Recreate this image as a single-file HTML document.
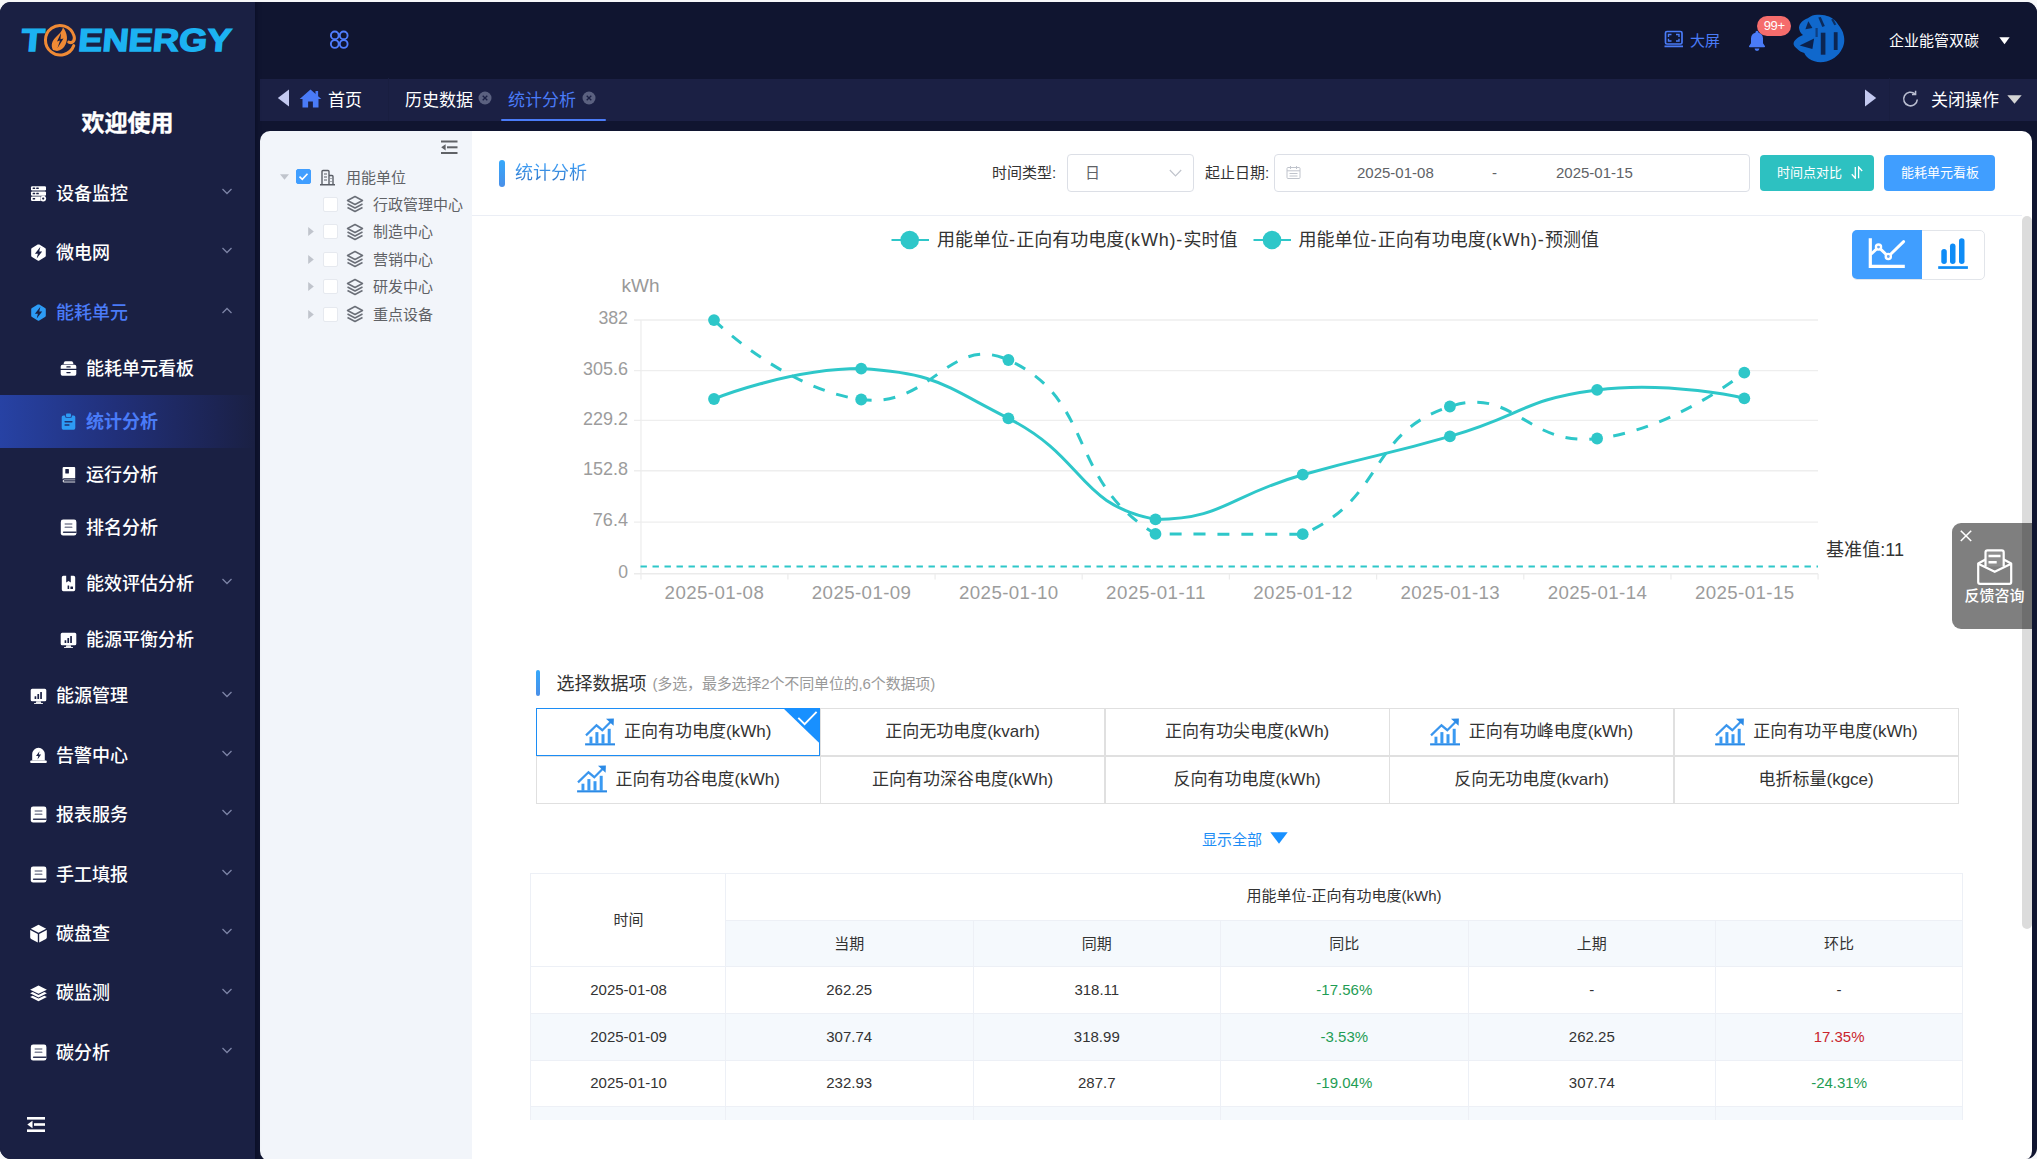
<!DOCTYPE html>
<html lang="zh-CN">
<head>
<meta charset="utf-8">
<title>统计分析</title>
<style>
*{box-sizing:border-box;margin:0;padding:0}
html,body{width:2037px;height:1159px;overflow:hidden;background:#f6f7f9}
body{font-family:"Liberation Sans","Noto Sans CJK SC",sans-serif;color:#333;position:relative}
.abs{position:absolute}
#app{position:absolute;left:0;top:2px;width:2037px;height:1157px;background:#101530;border-radius:11px;overflow:hidden}
#w{position:absolute;left:0;top:-2px;width:2037px;height:1159px}
#side{position:absolute;left:0;top:0;width:255px;height:1159px;background:#1a2043;box-shadow:1px 0 4px rgba(5,8,30,.550);z-index:2}
#welcome{position:absolute;left:0;top:106.300px;-webkit-text-stroke:.400px #fff;width:255px;text-align:center;font-size:23px;font-weight:700;color:#fff;line-height:34px;letter-spacing:0}
.mi{position:absolute;left:0;width:255px;height:59.4px;color:#fff;font-size:18px;font-weight:500}
.mi .ic{position:absolute;left:30px;top:22px;width:17px;height:17px;overflow:visible}
.mi .tx{position:absolute;left:56px;top:2.800px;line-height:57px;white-space:nowrap}
.mi .ar{position:absolute;left:221px;top:23px;width:12px;height:8px}
.sm{position:absolute;left:0;width:255px;height:53px;color:#fff;font-size:18px;font-weight:500}
.sm .ic{position:absolute;left:60px;top:19px;width:17px;height:17px;overflow:visible}
.sm .tx{position:absolute;left:86px;top:2.800px;line-height:51px;white-space:nowrap}
.sm .ar{position:absolute;left:221px;top:20px;width:12px;height:8px}
.blue{color:#4a7bf7}
#topbar{position:absolute;left:255px;top:0;width:1782px;height:78px;background:#101530}
#tabs{position:absolute;left:260px;top:79px;width:1777px;height:42px;background:#1b2044;color:#fff;font-size:17px}
#tabs .t{position:absolute;top:0;line-height:42px;white-space:nowrap}
#tree{position:absolute;left:260px;top:131px;width:212px;height:1030px;background:#f2f5fa;border-radius:10px 0 0 10px}
.tn{position:absolute;font-size:15px;color:#606266;line-height:20px;white-space:nowrap;margin-top:.500px}
.cb{position:absolute;width:15px;height:15px;border:1px solid #e6e9ef;border-radius:2px;background:#fff}
#main{position:absolute;left:472px;top:131px;width:1560px;height:1030px;background:#fff;border-radius:0 10px 10px 0;overflow:hidden}
</style>
</head>
<body>
<div id="app"><div id="w">

<div id="side">
<svg class="abs" style="left:14px;top:18px" width="230" height="44" viewBox="14 18 230 44">
  <g fill="#1cb2f2" stroke="#1cb2f2" stroke-width="1.400" stroke-linejoin="miter" font-family="Liberation Sans, sans-serif" font-weight="700" font-size="31.800" transform="translate(0 51.300) skewX(-5) translate(0 -51.300)">
    <text x="20.500" y="51.300" textLength="23" lengthAdjust="spacingAndGlyphs">T</text>
    <text x="77.500" y="51.300" textLength="153" lengthAdjust="spacingAndGlyphs">ENERGY</text>
  </g>
  <g transform="rotate(-20 60 40)"><path d="M71 50A14.600 14.800 0 1 1 74.600 40.500C74.600 45.500 70.500 48 67.500 45" fill="none" stroke="#f08a35" stroke-width="3" stroke-linecap="round"/></g>
  <path d="M53 50C50.500 45 52 41 56 37C59 34 62 31.500 63 27.500C67.500 33 68 39.500 65.500 44.500C64 48 60.500 50.500 57 51z" fill="#f08a35"/>
  <path d="M61 33 57 41.500l3-1L57.500 48l6-9.500-3 .800z" fill="#1a2043"/>
</svg>
<div id="welcome">欢迎使用</div>

<div class="mi" style="top:163.0px"><svg class="ic" viewBox="0 0 17 17" fill="currentColor"><rect x="1" y="1.2" width="15" height="4.3" rx="1.2"/><rect x="1" y="6.4" width="15" height="4.3" rx="1.2"/><path d="M2.2 11.6h8.6a4.3 4.3 0 0 0 0 4.3H2.2a1.2 1.2 0 0 1-1.2-1.2v-1.9a1.2 1.2 0 0 1 1.2-1.2z"/><circle cx="13.2" cy="13.6" r="2.9"/><g fill="#1a2043"><rect x="2.6" y="2.6" width="2.6" height="1.5" rx=".5"/><rect x="6.2" y="2.6" width="2.6" height="1.5" rx=".5"/><rect x="2.6" y="7.8" width="2.6" height="1.5" rx=".5"/><rect x="6.2" y="7.8" width="2.6" height="1.5" rx=".5"/><rect x="2.6" y="13" width="2.6" height="1.5" rx=".5"/><circle cx="13.2" cy="13.6" r="1.1"/></g></svg><span class="tx">设备监控</span><svg class="ar" viewBox="0 0 12 8" fill="none" stroke="#7c83a6" stroke-width="1.3" transform="translate(0 1.500)"><path d="M1.500 1.500 6 6l4.500-4.500"/></svg></div>
<div class="mi" style="top:222.4px"><svg class="ic" viewBox="0 0 17 17" fill="currentColor"><path d="M8.5 .4a1.6 1.6 0 0 1 .8.2l5.7 3.3a1.6 1.6 0 0 1 .8 1.4v6.4a1.6 1.6 0 0 1-.8 1.4l-5.7 3.3a1.6 1.6 0 0 1-1.6 0l-5.7-3.3a1.6 1.6 0 0 1-.8-1.4V5.300a1.6 1.6 0 0 1 .8-1.400l5.700-3.300a1.600 1.600 0 0 1 .800-.200z"/><path d="M10.400 2.800 4.900 9.700h3l-1.200 4.700 5.500-7h-3z" fill="#1a2043"/></svg><span class="tx">微电网</span><svg class="ar" viewBox="0 0 12 8" fill="none" stroke="#7c83a6" stroke-width="1.3" transform="translate(0 1.500)"><path d="M1.500 1.500 6 6l4.500-4.500"/></svg></div>
<div class="mi blue" style="top:281.8px"><svg class="ic" viewBox="0 0 17 17" fill="currentColor" style="color:#2d9bf5"><path d="M8.5 .4a1.6 1.6 0 0 1 .8.2l5.7 3.3a1.6 1.6 0 0 1 .8 1.4v6.4a1.6 1.6 0 0 1-.8 1.4l-5.7 3.3a1.6 1.6 0 0 1-1.6 0l-5.7-3.3a1.6 1.6 0 0 1-.8-1.4V5.300a1.6 1.6 0 0 1 .8-1.400l5.700-3.300a1.600 1.600 0 0 1 .800-.200z"/><path d="M10.400 2.800 4.900 9.700h3l-1.200 4.700 5.500-7h-3z" fill="#1a2043"/></svg><span class="tx">能耗单元</span><svg class="ar" viewBox="0 0 12 8" fill="none" stroke="#7c83a6" stroke-width="1.3" transform="translate(0 1.500)"><path d="M1.500 6.500 6 2l4.500 4.500"/></svg></div>
<div class="sm" style="top:341.2px;height:53.0px"><svg class="ic" style="top:19.0px" viewBox="0 0 17 17" fill="currentColor"><path d="M5.6 1.300h5.800a1.700 1.700 0 0 1 1.600 1.200l.5 1.700H3.500l.5-1.700A1.700 1.700 0 0 1 5.600 1.300z"/><path d="M2.400 4.800h12.200a1.700 1.700 0 0 1 1.700 1.700v2.300H.700V6.500a1.700 1.700 0 0 1 1.700-1.700z"/><path d="M.700 10h15.600v4a1.700 1.700 0 0 1-1.700 1.700H2.400A1.700 1.700 0 0 1 .700 14z"/><g fill="#1a2043"><rect x="6.300" y="6.300" width="4.400" height="1.300" rx=".6"/><rect x="6.300" y="11.900" width="4.400" height="1.300" rx=".6"/></g></svg><span class="tx" style="line-height:51.0px">能耗单元看板</span></div>
<div class="abs" style="left:0;top:395.200px;width:255px;height:52.600px;background:linear-gradient(90deg,#2742a4 0%,#21307a 45%,#1c2453 85%,#1a2043 100%)"></div>
<div class="sm" style="top:394.2px;height:53.0px;font-weight:700"><svg class="ic" viewBox="0 0 17 17" fill="currentColor" style="top:19.0px;color:#2d9bf5"><path d="M3.300 2.500h1.900v1.300a1 1 0 0 0 1 1h4.600a1 1 0 0 0 1-1V2.500h1.900a1.600 1.600 0 0 1 1.600 1.600v11a1.600 1.600 0 0 1-1.600 1.600H3.300a1.600 1.600 0 0 1-1.600-1.600v-11a1.600 1.600 0 0 1 1.600-1.600z"/><rect x="6" y=".5" width="5" height="3.400" rx=".9"/><g fill="#20306f"><rect x="4.400" y="8" width="8.200" height="1.500" rx=".7"/><rect x="4.400" y="11.300" width="5.200" height="1.500" rx=".7"/></g></svg><span class="tx blue" style="line-height:51.0px">统计分析</span></div>
<div class="sm" style="top:447.2px;height:53.0px"><svg class="ic" style="top:19.0px" viewBox="0 0 17 17" fill="currentColor"><path d="M3.800 1h10.400a1 1 0 0 1 1 1v10.300H4.200a1.600 1.600 0 0 0-1.600 1.300V2.200A1.200 1.200 0 0 1 3.800 1z"/><path d="M4.300 13.400h10.900v.9H4.400a.6.600 0 0 0 0 1.200h10.800v.9H4.300a1.600 1.600 0 0 1-1.700-1.500 1.600 1.600 0 0 1 1.700-1.500z" opacity=".85"/><rect x="5.300" y="3" width="3.600" height="4.400" rx=".5" fill="#1a2043"/></svg><span class="tx" style="line-height:51.0px">运行分析</span></div>
<div class="sm" style="top:500.2px;height:53.0px"><svg class="ic" style="top:19.0px" viewBox="0 0 17 17" fill="currentColor"><rect x=".800" y=".600" width="15.600" height="16" rx="2.300"/><g fill="#1a2043"><rect x="4.600" y="4.200" width="7.800" height="1.500" rx=".400" opacity=".550"/><rect x="4.600" y="7.600" width="7.800" height="1.500" rx=".400" opacity=".550"/><path d="M3.600 12.600h12.800v1.500H3.600a.750.750 0 0 1 0-1.500z" opacity=".900"/></g></svg><span class="tx" style="line-height:51.0px">排名分析</span></div>
<div class="sm" style="top:553.2px;height:59.4px"><svg class="ic" style="top:22.2px" viewBox="0 0 17 17" fill="currentColor"><path d="M3.400.800h2.800v6.800l2.300-1.600 2.300 1.600V.800h2.800a1.600 1.600 0 0 1 1.600 1.600v12.200a1.600 1.600 0 0 1-1.600 1.600H3.400a1.600 1.600 0 0 1-1.600-1.600V2.400A1.600 1.600 0 0 1 3.400.800z"/><g fill="#1a2043"><rect x="7.600" y="10.400" width="1.600" height="3.600" rx=".3"/><rect x="10.400" y="11.600" width="2.600" height="2.400" rx=".3"/></g></svg><span class="tx" style="line-height:57.4px">能效评估分析</span><svg class="ar" style="top:23.2px" viewBox="0 0 12 8" fill="none" stroke="#7c83a6" stroke-width="1.3" transform="translate(0 1.500)"><path d="M1.500 1.500 6 6l4.500-4.500"/></svg></div>
<div class="sm" style="top:612.6px;height:53.0px"><svg class="ic" style="top:19.0px" viewBox="0 0 17 17" fill="currentColor"><path d="M2.200 .700h12.600a1.500 1.500 0 0 1 1.500 1.500v9.500a1.500 1.500 0 0 1-1.500 1.500H2.200a1.500 1.500 0 0 1-1.500-1.500V2.200a1.500 1.500 0 0 1 1.500-1.500z"/><path d="M6.300 13.200h4.400l.5 1.700h1.300a.5.500 0 0 1 0 1.100H4.500a.5.500 0 0 1 0-1.100h1.300z" opacity=".9"/><g fill="#1a2043"><rect x="4.600" y="8.300" width="1.700" height="2.700" rx=".3"/><rect x="7.400" y="6" width="1.700" height="5" rx=".3"/><rect x="10.200" y="4" width="1.700" height="7" rx=".3"/></g></svg><span class="tx" style="line-height:51.0px">能源平衡分析</span></div>
<div class="mi" style="top:665.6px"><svg class="ic" viewBox="0 0 17 17" fill="currentColor"><path d="M2.200 .700h12.600a1.500 1.500 0 0 1 1.500 1.500v9.500a1.500 1.500 0 0 1-1.500 1.500H2.200a1.500 1.500 0 0 1-1.500-1.500V2.200a1.500 1.500 0 0 1 1.500-1.500z"/><path d="M6.300 13.200h4.400l.5 1.700h1.300a.5.500 0 0 1 0 1.100H4.500a.5.500 0 0 1 0-1.100h1.300z" opacity=".9"/><g fill="#1a2043"><rect x="4.600" y="8.300" width="1.700" height="2.700" rx=".3"/><rect x="7.400" y="6" width="1.700" height="5" rx=".3"/><rect x="10.200" y="4" width="1.700" height="7" rx=".3"/></g></svg><span class="tx">能源管理</span><svg class="ar" viewBox="0 0 12 8" fill="none" stroke="#7c83a6" stroke-width="1.3" transform="translate(0 1.500)"><path d="M1.500 1.500 6 6l4.500-4.500"/></svg></div>
<div class="mi" style="top:725.0px"><svg class="ic" viewBox="0 0 17 17" fill="currentColor"><path d="M8.500 .800a6.300 6.300 0 0 1 6.300 6.300v6.400H2.200V7.100A6.300 6.300 0 0 1 8.500 .800z"/><rect x=".200" y="13.600" width="16.600" height="2.400" rx=".900"/><path d="M9.500 4.300 6 9.100h2.300l-.800 3.500 3.600-5H8.800z" fill="#1a2043"/></svg><span class="tx">告警中心</span><svg class="ar" viewBox="0 0 12 8" fill="none" stroke="#7c83a6" stroke-width="1.3" transform="translate(0 1.500)"><path d="M1.500 1.500 6 6l4.500-4.500"/></svg></div>
<div class="mi" style="top:784.4px"><svg class="ic" viewBox="0 0 17 17" fill="currentColor"><rect x=".800" y=".600" width="15.600" height="16" rx="2.300"/><g fill="#1a2043"><rect x="4.600" y="4.200" width="7.800" height="1.500" rx=".400" opacity=".550"/><rect x="4.600" y="7.600" width="7.800" height="1.500" rx=".400" opacity=".550"/><path d="M3.600 12.600h12.800v1.500H3.600a.750.750 0 0 1 0-1.500z" opacity=".900"/></g></svg><span class="tx">报表服务</span><svg class="ar" viewBox="0 0 12 8" fill="none" stroke="#7c83a6" stroke-width="1.3" transform="translate(0 1.500)"><path d="M1.500 1.500 6 6l4.500-4.500"/></svg></div>
<div class="mi" style="top:843.8px"><svg class="ic" viewBox="0 0 17 17" fill="currentColor"><rect x=".800" y=".600" width="15.600" height="16" rx="2.300"/><g fill="#1a2043"><rect x="4.600" y="4.200" width="7.800" height="1.500" rx=".400" opacity=".550"/><rect x="4.600" y="7.600" width="7.800" height="1.500" rx=".400" opacity=".550"/><path d="M3.600 12.600h12.800v1.500H3.600a.750.750 0 0 1 0-1.500z" opacity=".900"/></g></svg><span class="tx">手工填报</span><svg class="ar" viewBox="0 0 12 8" fill="none" stroke="#7c83a6" stroke-width="1.3" transform="translate(0 1.500)"><path d="M1.500 1.500 6 6l4.500-4.500"/></svg></div>
<div class="mi" style="top:903.2px"><svg class="ic" viewBox="0 0 17 17" fill="currentColor"><path d="M8.500 -.300 16.200 3.700 8.500 7.800 .800 3.700z"/><path d="M.200 5 7.800 9v8.400L1.100 13.900a1.600 1.600 0 0 1-.900-1.400z"/><path d="M16.800 5v7.500a1.600 1.600 0 0 1-.900 1.400L9.200 17.400V9z"/></svg><span class="tx">碳盘查</span><svg class="ar" viewBox="0 0 12 8" fill="none" stroke="#7c83a6" stroke-width="1.3" transform="translate(0 1.500)"><path d="M1.500 1.500 6 6l4.500-4.500"/></svg></div>
<div class="mi" style="top:962.6px"><svg class="ic" viewBox="0 0 17 17" fill="currentColor"><path d="M8.500 .600 16.900 4.700 8.500 8.800 .100 4.700z"/><path d="M2.700 7 8.500 9.900 14.300 7 16.900 8.300 8.500 12.500 .100 8.300z"/><path d="M2.700 10.700 8.500 13.600 14.300 10.700 16.900 12 8.500 16.200 .100 12z"/></svg><span class="tx">碳监测</span><svg class="ar" viewBox="0 0 12 8" fill="none" stroke="#7c83a6" stroke-width="1.3" transform="translate(0 1.500)"><path d="M1.500 1.500 6 6l4.500-4.500"/></svg></div>
<div class="mi" style="top:1022.0px"><svg class="ic" viewBox="0 0 17 17" fill="currentColor"><rect x=".800" y=".600" width="15.600" height="16" rx="2.300"/><g fill="#1a2043"><rect x="4.600" y="4.200" width="7.800" height="1.500" rx=".400" opacity=".550"/><rect x="4.600" y="7.600" width="7.800" height="1.500" rx=".400" opacity=".550"/><path d="M3.600 12.600h12.800v1.500H3.600a.750.750 0 0 1 0-1.500z" opacity=".900"/></g></svg><span class="tx">碳分析</span><svg class="ar" viewBox="0 0 12 8" fill="none" stroke="#7c83a6" stroke-width="1.3" transform="translate(0 1.500)"><path d="M1.500 1.500 6 6l4.500-4.500"/></svg></div>
<svg class="abs" style="left:27px;top:1116px" width="18" height="17" viewBox="0 0 18 17" fill="#fff"><rect x="0" y="1" width="18" height="2.600"/><rect x="7" y="7.200" width="11" height="2.600"/><rect x="0" y="13.400" width="18" height="2.600"/><path d="M5.500 4.800v7.400L.300 8.500z"/></svg>
</div><!--side-->
<div id="topbar"></div>
<svg class="abs" style="left:328px;top:29px" width="22" height="22" viewBox="328 29 22 22" fill="none" stroke="#4f7dfc" stroke-width="1.900"><circle cx="334.800" cy="35.400" r="3.900"/><circle cx="343.700" cy="35.400" r="3.900"/><circle cx="334.800" cy="44" r="3.900"/><circle cx="343.700" cy="44" r="3.900"/></svg>
<svg class="abs" style="left:1664px;top:30px" width="20" height="18" viewBox="0 0 20 18" fill="none" stroke="#4a7bf7" stroke-width="1.700"><rect x="1.500" y="1.500" width="16.500" height="12.500" rx="1.500"/><path d="M.500 16.300h18.500"/><path d="M4.500 7V4.500h3M15 7V4.500h-3M4.500 8.800V11h3M15 8.800V11h-3" stroke-width="1.400"/></svg>
<div class="abs" style="left:1690px;top:29.500px;font-size:15px;line-height:22px;color:#4a7bf7;white-space:nowrap">大屏</div>
<svg class="abs" style="left:1747px;top:30px" width="20" height="22" viewBox="0 0 20 22" fill="#4a7bf7"><path d="M10 .800a1.500 1.500 0 0 1 1.500 1.500v.400a6 6 0 0 1 4.500 5.800v4.800l1.900 2.600a.800.800 0 0 1-.600 1.300H2.700a.800.800 0 0 1-.600-1.300L4 13.300V8.500a6 6 0 0 1 4.500-5.800v-.400A1.500 1.500 0 0 1 10 .800z"/><path d="M7.600 18.500h4.800a2.400 2.400 0 0 1-4.800 0z"/></svg>
<div class="abs" style="left:1757px;top:16px;width:34.300px;height:19.600px;border-radius:10px;background:#f56c6c;color:#fff;font-size:13px;letter-spacing:-.400px;line-height:19.500px;text-align:center">99+</div>
<svg class="abs" style="left:1790px;top:12px" width="58" height="54" viewBox="1790 12 58 54"><path d="M1807.700 18.300C1811 15.800 1814 14.800 1817 14.800C1822 14.300 1826 15.300 1829 16.600C1833 18.500 1836 21 1837.800 24C1841 28 1843 31.500 1843.600 35C1844.300 37.500 1844.400 40 1844.200 42C1843.800 45.500 1842.500 48.500 1840.700 51.200C1838.500 54.500 1835.500 57.500 1832 59.300C1828.500 61.200 1824.500 62.200 1820.500 62.200C1816.500 62.200 1812.500 61 1809 58.800C1807 57.300 1805.300 55.300 1804.300 53C1801.500 52.300 1799 51 1797.300 49C1795.500 47.500 1793.900 46 1793.600 44.300C1793.400 42.500 1794.200 41 1795.600 39.700C1797.500 37.800 1800 36.300 1803 35C1800.500 33 1799.200 30.500 1799 28C1799 25.800 1800 23.800 1801.400 22.300C1803 20.500 1805.200 19.200 1807.700 18.300z" fill="#1068cc"/><g fill="#0b1535"><path d="M1808.300 21.200 1812.400 28.100 1805.400 29.300z" opacity=".8"/><path d="M1818.300 17.500 1820.800 17 1824.800 26 1822.300 27z" opacity=".75"/><path d="M1831.200 19.500 1833.200 18.800 1836.300 24.400 1834.300 25.200z" opacity=".7"/><path d="M1799.700 45.500 1814.100 38.500 1812.400 49z" opacity=".85"/><rect x="1820.800" y="32.700" width="4.600" height="22" opacity=".8"/><rect x="1833.800" y="32.200" width="3.800" height="17.800" opacity=".8"/><rect x="1815.500" y="28" width="2.200" height="9" opacity=".5"/></g></svg>
<div class="abs" style="left:1889px;top:29.500px;font-size:15px;line-height:22px;color:#fff;white-space:nowrap">企业能管双碳</div>
<svg class="abs" style="left:1999px;top:37px" width="11" height="8" viewBox="0 0 11 8" fill="#fff"><path d="M.300.300h10.400L5.500 7.300z"/></svg>
<div id="tabs"></div>
<svg class="abs" style="left:277px;top:89px" width="13" height="18" viewBox="0 0 13 18" fill="#c3c9f0"><path d="M12 .500v17L.800 9z"/></svg>
<svg class="abs" style="left:299px;top:89px" width="23" height="19" viewBox="0 0 23 19" fill="#4a7bf7"><path d="M11.500.600 22.300 10h-2.800v8.400h-5.600v-6h-4.800v6H3.500V10H.700z"/><rect x="16.500" y="2" width="2.600" height="5"/></svg>
<div class="abs" style="left:328px;top:89px;font-size:17px;line-height:24px;color:#fff;white-space:nowrap">首页</div>
<div class="abs" style="left:388px;top:78px;width:1px;height:43px;background:#191e40"></div>
<div class="abs" style="left:405px;top:89px;font-size:17px;line-height:24px;color:#fff;white-space:nowrap">历史数据</div>
<svg class="abs" style="left:478px;top:91px" width="14" height="14" viewBox="0 0 14 14"><circle cx="7" cy="7" r="6.500" fill="#5b6180"/><path d="M4.700 4.700l4.600 4.600M9.300 4.700 4.700 9.300" stroke="#1b2044" stroke-width="1.300"/></svg>
<div class="abs" style="left:508px;top:89px;font-size:17px;line-height:24px;color:#4a7bf7;white-space:nowrap">统计分析</div>
<svg class="abs" style="left:582px;top:91px" width="14" height="14" viewBox="0 0 14 14"><circle cx="7" cy="7" r="6.500" fill="#5b6180"/><path d="M4.700 4.700l4.600 4.600M9.300 4.700 4.700 9.300" stroke="#1b2044" stroke-width="1.300"/></svg>
<div class="abs" style="left:501px;top:118.500px;width:104.500px;height:2.300px;background:#4a7bf7;border-radius:1.200px"></div>
<svg class="abs" style="left:1864px;top:89px" width="13" height="18" viewBox="0 0 13 18" fill="#c3c9f0"><path d="M1 .500v17L12.200 9z"/></svg>
<div class="abs" style="left:1889px;top:78px;width:1px;height:43px;background:#191e40"></div>
<svg class="abs" style="left:1902px;top:90px" width="18" height="18" viewBox="0 0 18 18" fill="none" stroke="#b9bdd0" stroke-width="1.600"><path d="M15.300 9.500a6.800 6.800 0 1 1-2.300-5.600"/><path d="M13.600.800v3.600H10" stroke-width="1.500"/></svg>
<div class="abs" style="left:1931px;top:89px;font-size:17px;line-height:24px;color:#fff;white-space:nowrap">关闭操作</div>
<svg class="abs" style="left:2007px;top:95px" width="15" height="9" viewBox="0 0 15 9" fill="#d4d4d4"><path d="M.300.300h14.400L7.500 8.700z"/></svg>

<div id="tree"></div>
<svg class="abs" style="left:441px;top:140px" width="17" height="15" viewBox="0 0 17 15" fill="#606266"><rect x="0" y=".500" width="16.500" height="2"/><rect x="6" y="6.300" width="10.500" height="2"/><rect x="0" y="12" width="16.500" height="2"/><path d="M4.600 4.200v6.200L.200 7.300z"/></svg>
<svg class="abs" style="left:280px;top:174px" width="9" height="6" viewBox="0 0 9 6" fill="#c0c4cc"><path d="M0 .200h9L4.500 5.800z"/></svg>
<div class="cb" style="left:296px;top:169px;background:#409eff;border-color:#409eff"></div>
<svg class="abs" style="left:298px;top:172px" width="11" height="9" viewBox="0 0 11 9" fill="none" stroke="#fff" stroke-width="1.600"><path d="M1.500 4.600 4.300 7.300 9.500 1.700"/></svg>
<svg class="abs" style="left:320px;top:169px" width="15" height="17" viewBox="0 0 15 17" fill="none" stroke="#5a5e66" stroke-width="1.400"><path d="M2 15.500V2.500a1 1 0 0 1 1-1h5a1 1 0 0 1 1 1v13M9 6.500h3a1 1 0 0 1 1 1v8"/><path d="M0 15.800h15" stroke-width="1.500"/><path d="M4 5h3M4 8h3M4 11h3M10.500 9.500h1M10.500 12.500h1" stroke-width="1.200"/></svg>
<div class="tn" style="left:346px;top:167px">用能单位</div>
<div class="cb" style="left:323px;top:196.8px"></div>
<svg class="abs" style="left:346px;top:195.3px" width="18" height="18" viewBox="0 0 18 18" fill="none" stroke="#6b6f78" stroke-width="1.500" stroke-linejoin="round"><path d="M9 1.500 16.500 5.500 9 9.500 1.500 5.500z"/><path d="M1.500 9 9 13l7.500-4"/><path d="M1.500 12.500 9 16.500l7.500-4"/></svg>
<div class="tn" style="left:373px;top:194.3px">行政管理中心</div>
<svg class="abs" style="left:308px;top:227.3px" width="6" height="9" viewBox="0 0 6 9" fill="#c0c4cc"><path d="M.200 0v9L5.800 4.500z"/></svg>
<div class="cb" style="left:323px;top:224.3px"></div>
<svg class="abs" style="left:346px;top:222.8px" width="18" height="18" viewBox="0 0 18 18" fill="none" stroke="#6b6f78" stroke-width="1.500" stroke-linejoin="round"><path d="M9 1.500 16.500 5.500 9 9.500 1.500 5.500z"/><path d="M1.500 9 9 13l7.500-4"/><path d="M1.500 12.500 9 16.500l7.500-4"/></svg>
<div class="tn" style="left:373px;top:221.8px">制造中心</div>
<svg class="abs" style="left:308px;top:254.8px" width="6" height="9" viewBox="0 0 6 9" fill="#c0c4cc"><path d="M.200 0v9L5.800 4.500z"/></svg>
<div class="cb" style="left:323px;top:251.8px"></div>
<svg class="abs" style="left:346px;top:250.3px" width="18" height="18" viewBox="0 0 18 18" fill="none" stroke="#6b6f78" stroke-width="1.500" stroke-linejoin="round"><path d="M9 1.500 16.500 5.500 9 9.500 1.500 5.500z"/><path d="M1.500 9 9 13l7.500-4"/><path d="M1.500 12.500 9 16.500l7.500-4"/></svg>
<div class="tn" style="left:373px;top:249.3px">营销中心</div>
<svg class="abs" style="left:308px;top:282.3px" width="6" height="9" viewBox="0 0 6 9" fill="#c0c4cc"><path d="M.200 0v9L5.800 4.500z"/></svg>
<div class="cb" style="left:323px;top:279.3px"></div>
<svg class="abs" style="left:346px;top:277.8px" width="18" height="18" viewBox="0 0 18 18" fill="none" stroke="#6b6f78" stroke-width="1.500" stroke-linejoin="round"><path d="M9 1.500 16.500 5.500 9 9.500 1.500 5.500z"/><path d="M1.500 9 9 13l7.500-4"/><path d="M1.500 12.500 9 16.500l7.500-4"/></svg>
<div class="tn" style="left:373px;top:276.8px">研发中心</div>
<svg class="abs" style="left:308px;top:309.9px" width="6" height="9" viewBox="0 0 6 9" fill="#c0c4cc"><path d="M.200 0v9L5.800 4.500z"/></svg>
<div class="cb" style="left:323px;top:306.9px"></div>
<svg class="abs" style="left:346px;top:305.4px" width="18" height="18" viewBox="0 0 18 18" fill="none" stroke="#6b6f78" stroke-width="1.500" stroke-linejoin="round"><path d="M9 1.500 16.500 5.500 9 9.500 1.500 5.500z"/><path d="M1.500 9 9 13l7.500-4"/><path d="M1.500 12.500 9 16.500l7.500-4"/></svg>
<div class="tn" style="left:373px;top:304.4px">重点设备</div>

<div id="main"></div>
<div class="abs" style="left:499px;top:160px;width:6px;height:27px;border-radius:3px;background:linear-gradient(180deg,#35a8fb,#4a8fe8)"></div>
<div class="abs" style="left:515px;top:160px;font-size:18px;line-height:26px;color:transparent;background:linear-gradient(180deg,#3f9ff6 15%,#2f72c4 90%);-webkit-background-clip:text;background-clip:text;white-space:nowrap">统计分析</div>
<div class="abs" style="left:992px;top:162px;font-size:15px;line-height:22px;color:#333;white-space:nowrap">时间类型:</div>
<div class="abs" style="left:1067px;top:154px;width:127px;height:38px;border:1px solid #dcdfe6;border-radius:4px;background:#fff"></div>
<div class="abs" style="left:1085px;top:162px;font-size:15px;line-height:22px;color:#606266">日</div>
<svg class="abs" style="left:1169px;top:169px" width="13" height="8" viewBox="0 0 13 8" fill="none" stroke="#c0c4cc" stroke-width="1.200"><path d="M.800 1 6.500 6.800 12.200 1"/></svg>
<div class="abs" style="left:1205px;top:162px;font-size:15px;line-height:22px;color:#333;white-space:nowrap">起止日期:</div>
<div class="abs" style="left:1274px;top:154px;width:476px;height:38px;border:1px solid #dcdfe6;border-radius:4px;background:#fff"></div>
<svg class="abs" style="left:1286px;top:165px" width="15" height="15" viewBox="0 0 15 15" fill="none" stroke="#c0c4cc" stroke-width="1"><rect x="1" y="2.500" width="13" height="11" rx="1"/><path d="M1 5.800h13M4.500 1v3M10.500 1v3M3.500 8.500h8M3.500 11h8" /></svg>
<div class="abs" style="left:1357px;top:162px;font-size:15px;line-height:22px;color:#606266;white-space:nowrap">2025-01-08</div>
<div class="abs" style="left:1492px;top:162px;font-size:15px;line-height:22px;color:#606266">-</div>
<div class="abs" style="left:1556px;top:162px;font-size:15px;line-height:22px;color:#606266;white-space:nowrap">2025-01-15</div>
<div class="abs" style="left:1760px;top:155px;width:114px;height:36px;border-radius:4px;background:#2dc1c1"></div>
<div class="abs" style="left:1777px;top:164px;font-size:13px;line-height:18px;color:#fff;white-space:nowrap">时间点对比</div>
<svg class="abs" style="left:1851px;top:166px" width="12" height="13" viewBox="0 0 12 13" fill="none" stroke="#fff" stroke-width="1.300"><path d="M4.300 1v11.300L.800 8.300M7.600 12.300V1L11.200 5"/></svg>
<div class="abs" style="left:1884px;top:155px;width:111px;height:36px;border-radius:4px;background:#409eff"></div>
<div class="abs" style="left:1901px;top:164px;font-size:13px;line-height:18px;color:#fff;white-space:nowrap">能耗单元看板</div>
<div class="abs" style="left:472px;top:215px;width:1550px;height:1px;background:#ebeef5"></div>
<svg class="abs" style="left:472px;top:216px" width="1548" height="430" viewBox="472 216 1548 430" font-family="Liberation Sans, Noto Sans CJK SC, sans-serif">
<path d="M891.5 240h37.500" stroke="#2ec7c9" stroke-width="2"/><circle cx="909.700" cy="240" r="9.300" fill="#2ec7c9"/>
<text x="937" y="245.500" font-size="18" fill="#333">用能单位<tspan letter-spacing="1.300">-</tspan>正向有功电度<tspan letter-spacing=".800">(kWh)</tspan><tspan letter-spacing="1.300">-</tspan>实时值</text>
<path d="M1253.500 240h37.500" stroke="#2ec7c9" stroke-width="2"/><circle cx="1272" cy="240" r="9.300" fill="#2ec7c9"/>
<text x="1298.500" y="245.500" font-size="18" fill="#333">用能单位<tspan letter-spacing="1.300">-</tspan>正向有功电度<tspan letter-spacing=".800">(kWh)</tspan><tspan letter-spacing="1.300">-</tspan>预测值</text>
<text x="621.500" y="292" font-size="18" fill="#999" textLength="38" lengthAdjust="spacingAndGlyphs">kWh</text>
<path d="M634 320.0H1818" stroke="#eeeeee" stroke-width="1.400"/>
<path d="M634 370.6H1818" stroke="#eeeeee" stroke-width="1.400"/>
<path d="M634 420.4H1818" stroke="#eeeeee" stroke-width="1.400"/>
<path d="M634 470.8H1818" stroke="#eeeeee" stroke-width="1.400"/>
<path d="M634 522.1H1818" stroke="#eeeeee" stroke-width="1.400"/>
<path d="M634 573.800H1818" stroke="#ebebeb" stroke-width="1.400"/>
<path d="M641 320V579.500" stroke="#ececec" stroke-width="1.200"/>
<path d="M787.9 573.800v5.700" stroke="#ececec" stroke-width="1.200"/>
<path d="M935.1 573.800v5.700" stroke="#ececec" stroke-width="1.200"/>
<path d="M1082.2 573.800v5.700" stroke="#ececec" stroke-width="1.200"/>
<path d="M1229.4 573.800v5.700" stroke="#ececec" stroke-width="1.200"/>
<path d="M1376.6 573.800v5.700" stroke="#ececec" stroke-width="1.200"/>
<path d="M1523.8 573.800v5.700" stroke="#ececec" stroke-width="1.200"/>
<path d="M1671.0 573.800v5.700" stroke="#ececec" stroke-width="1.200"/>
<path d="M1818.1 573.800v5.700" stroke="#ececec" stroke-width="1.200"/>
<text x="628" y="324.1" font-size="18.500" fill="#9c9c9c" text-anchor="end" textLength="29.6" lengthAdjust="spacingAndGlyphs">382</text>
<text x="628" y="374.7" font-size="18.500" fill="#9c9c9c" text-anchor="end" textLength="45.0" lengthAdjust="spacingAndGlyphs">305.6</text>
<text x="628" y="424.5" font-size="18.500" fill="#9c9c9c" text-anchor="end" textLength="45.0" lengthAdjust="spacingAndGlyphs">229.2</text>
<text x="628" y="474.9" font-size="18.500" fill="#9c9c9c" text-anchor="end" textLength="45.0" lengthAdjust="spacingAndGlyphs">152.8</text>
<text x="628" y="526.2" font-size="18.500" fill="#9c9c9c" text-anchor="end" textLength="35.2" lengthAdjust="spacingAndGlyphs">76.4</text>
<text x="628" y="577.9" font-size="18.500" fill="#9c9c9c" text-anchor="end" textLength="9.8" lengthAdjust="spacingAndGlyphs">0</text>
<text x="714.2" y="598.900" font-size="18.700" fill="#9c9c9c" text-anchor="middle" textLength="99.200" lengthAdjust="spacing">2025-01-08</text>
<text x="861.4" y="598.900" font-size="18.700" fill="#9c9c9c" text-anchor="middle" textLength="99.200" lengthAdjust="spacing">2025-01-09</text>
<text x="1008.6" y="598.900" font-size="18.700" fill="#9c9c9c" text-anchor="middle" textLength="99.200" lengthAdjust="spacing">2025-01-10</text>
<text x="1155.7" y="598.900" font-size="18.700" fill="#9c9c9c" text-anchor="middle" textLength="99.200" lengthAdjust="spacing">2025-01-11</text>
<text x="1302.9" y="598.900" font-size="18.700" fill="#9c9c9c" text-anchor="middle" textLength="99.200" lengthAdjust="spacing">2025-01-12</text>
<text x="1450.1" y="598.900" font-size="18.700" fill="#9c9c9c" text-anchor="middle" textLength="99.200" lengthAdjust="spacing">2025-01-13</text>
<text x="1597.3" y="598.900" font-size="18.700" fill="#9c9c9c" text-anchor="middle" textLength="99.200" lengthAdjust="spacing">2025-01-14</text>
<text x="1744.5" y="598.900" font-size="18.700" fill="#9c9c9c" text-anchor="middle" textLength="99.200" lengthAdjust="spacing">2025-01-15</text>
<path d="M640.500 566.500H1818" stroke="#2ec7c9" stroke-width="1.900" stroke-dasharray="6.400 5.600"/>
<text x="1826" y="555.500" font-size="18" fill="#333" textLength="78" lengthAdjust="spacingAndGlyphs">基准值:11</text>
<path d="M714.00 399.00 C714.00 399.00 788.81 368.60 861.18 368.60 C935.99 373.50 939.89 383.22 1008.36 418.30 C1087.07 458.62 1076.47 504.25 1155.54 519.40 C1223.65 519.40 1228.71 495.57 1302.72 474.70 C1375.89 454.07 1376.85 457.44 1449.90 436.40 C1524.03 415.04 1521.80 399.64 1597.08 389.90 C1668.98 380.59 1744.26 398.30 1744.26 398.30" fill="none" stroke="#2ec7c9" stroke-width="3" stroke-linejoin="round"/>
<path d="M714.00 320.10 C714.00 320.10 784.17 389.06 861.18 399.50 C931.35 409.01 949.37 333.07 1008.36 360.00 C1096.55 400.27 1066.12 480.98 1155.54 533.90 C1213.30 534.20 1239.39 534.20 1302.72 534.20 C1386.57 497.91 1366.89 433.49 1449.90 406.50 C1514.07 385.64 1525.99 446.66 1597.08 438.50 C1673.17 429.76 1744.26 372.70 1744.26 372.70" fill="none" stroke="#2ec7c9" stroke-width="3" stroke-dasharray="12 12"/>
<circle cx="714.0" cy="399.0" r="5.900" fill="#2ec7c9"/>
<circle cx="861.2" cy="368.6" r="5.900" fill="#2ec7c9"/>
<circle cx="1008.4" cy="418.3" r="5.900" fill="#2ec7c9"/>
<circle cx="1155.5" cy="519.4" r="5.900" fill="#2ec7c9"/>
<circle cx="1302.7" cy="474.7" r="5.900" fill="#2ec7c9"/>
<circle cx="1449.9" cy="436.4" r="5.900" fill="#2ec7c9"/>
<circle cx="1597.1" cy="389.9" r="5.900" fill="#2ec7c9"/>
<circle cx="1744.3" cy="398.3" r="5.900" fill="#2ec7c9"/>
<circle cx="714.0" cy="320.1" r="5.900" fill="#2ec7c9"/>
<circle cx="861.2" cy="399.5" r="5.900" fill="#2ec7c9"/>
<circle cx="1008.4" cy="360.0" r="5.900" fill="#2ec7c9"/>
<circle cx="1155.5" cy="533.9" r="5.900" fill="#2ec7c9"/>
<circle cx="1302.7" cy="534.2" r="5.900" fill="#2ec7c9"/>
<circle cx="1449.9" cy="406.5" r="5.900" fill="#2ec7c9"/>
<circle cx="1597.1" cy="438.5" r="5.900" fill="#2ec7c9"/>
<circle cx="1744.3" cy="372.7" r="5.900" fill="#2ec7c9"/>
</svg>
<div class="abs" style="left:1852px;top:229.500px;width:133px;height:50px;border:1px solid #e2e5ea;border-radius:5px;background:#fff"></div>
<div class="abs" style="left:1852px;top:230px;width:70px;height:48.500px;border-radius:5px 0 0 5px;background:#409eff"></div>
<svg class="abs" style="left:1860px;top:232px" width="54" height="44" viewBox="1860 232 54 44" fill="none" stroke="#fff" stroke-width="3.200"><path d="M1870.300 238.200V266.400H1904.800"/><path d="M1871.500 253.800 1878.500 247.100 1888.300 256.500 1903.600 241.600" stroke-width="2.900" stroke-linecap="round"/><circle cx="1878.500" cy="247.100" r="2.600" fill="#6aa9f5" stroke-width="2.300"/><circle cx="1888.300" cy="256.500" r="2.600" fill="#6aa9f5" stroke-width="2.300"/></svg>
<svg class="abs" style="left:1934px;top:234px" width="38" height="38" viewBox="1934 234 38 38" fill="#0f8cf6"><rect x="1941.300" y="249" width="5.500" height="15" rx="2.750"/><rect x="1950" y="243.600" width="5.500" height="20.400" rx="2.750"/><rect x="1959" y="238.200" width="5.500" height="25.800" rx="2.750"/><rect x="1938.200" y="266.200" width="29.700" height="2.700"/></svg>
<div class="abs" style="left:536px;top:670px;width:4px;height:26px;border-radius:2px;background:linear-gradient(180deg,#35a8fb,#4a8fe8)"></div>
<div class="abs" style="left:556.500px;top:671px;font-size:18px;line-height:26px;color:#333;white-space:nowrap">选择数据项</div>
<div class="abs" style="left:652.500px;top:673px;font-size:15px;line-height:22px;color:#999;white-space:nowrap;letter-spacing:-.150px">(多选，最多选择2个不同单位的,6个数据项)</div>
<div class="abs" style="left:536.2px;top:708.0px;width:284.4px;height:48.4px;border:1px solid #e0e0e0;font-size:17px;line-height:45.8px;text-align:center;color:#333;white-space:nowrap"><svg style="vertical-align:middle;position:relative;top:-1px;margin-right:8.800px" width="30" height="28" viewBox="585 717.500 30 28" fill="#3a9af2"><rect x="585.100" y="742.800" width="29.900" height="2.100" fill="#2b8ae6"/><rect x="589.500" y="736.200" width="2.900" height="7"/><rect x="595.400" y="731.600" width="3" height="11.500"/><rect x="601.500" y="733.700" width="3" height="9.500"/><rect x="607.700" y="728.300" width="3" height="15"/><path d="M586 734.900 596.500 724.800 602.300 729.700 611.500 720.500" fill="none" stroke="#3a96ee" stroke-width="2.200"/><path d="M606 718.200 613.900 717.900 613.600 725.200z" fill="#2b8ae6"/></svg>正向有功电度(kWh)</div>
<div class="abs" style="left:820.0px;top:708.0px;width:285.2px;height:48.4px;border:1px solid #e0e0e0;font-size:17px;line-height:45.8px;text-align:center;color:#333;white-space:nowrap">正向无功电度(kvarh)</div>
<div class="abs" style="left:1104.6px;top:708.0px;width:285.0px;height:48.4px;border:1px solid #e0e0e0;font-size:17px;line-height:45.8px;text-align:center;color:#333;white-space:nowrap">正向有功尖电度(kWh)</div>
<div class="abs" style="left:1389.0px;top:708.0px;width:285.2px;height:48.4px;border:1px solid #e0e0e0;font-size:17px;line-height:45.8px;text-align:center;color:#333;white-space:nowrap"><svg style="vertical-align:middle;position:relative;top:-1px;margin-right:8.800px" width="30" height="28" viewBox="585 717.500 30 28" fill="#3a9af2"><rect x="585.100" y="742.800" width="29.900" height="2.100" fill="#2b8ae6"/><rect x="589.500" y="736.200" width="2.900" height="7"/><rect x="595.400" y="731.600" width="3" height="11.500"/><rect x="601.500" y="733.700" width="3" height="9.500"/><rect x="607.700" y="728.300" width="3" height="15"/><path d="M586 734.900 596.500 724.800 602.300 729.700 611.500 720.500" fill="none" stroke="#3a96ee" stroke-width="2.200"/><path d="M606 718.200 613.900 717.900 613.600 725.200z" fill="#2b8ae6"/></svg>正向有功峰电度(kWh)</div>
<div class="abs" style="left:1673.6px;top:708.0px;width:285.0px;height:48.4px;border:1px solid #e0e0e0;font-size:17px;line-height:45.8px;text-align:center;color:#333;white-space:nowrap"><svg style="vertical-align:middle;position:relative;top:-1px;margin-right:8.800px" width="30" height="28" viewBox="585 717.500 30 28" fill="#3a9af2"><rect x="585.100" y="742.800" width="29.900" height="2.100" fill="#2b8ae6"/><rect x="589.500" y="736.200" width="2.900" height="7"/><rect x="595.400" y="731.600" width="3" height="11.500"/><rect x="601.500" y="733.700" width="3" height="9.500"/><rect x="607.700" y="728.300" width="3" height="15"/><path d="M586 734.900 596.500 724.800 602.300 729.700 611.500 720.500" fill="none" stroke="#3a96ee" stroke-width="2.200"/><path d="M606 718.200 613.900 717.900 613.600 725.200z" fill="#2b8ae6"/></svg>正向有功平电度(kWh)</div>
<div class="abs" style="left:536.2px;top:755.8px;width:284.4px;height:48.6px;border:1px solid #e0e0e0;font-size:17px;line-height:45.0px;text-align:center;color:#333;white-space:nowrap"><svg style="vertical-align:middle;position:relative;top:-1px;margin-right:8.800px" width="30" height="28" viewBox="585 717.500 30 28" fill="#3a9af2"><rect x="585.100" y="742.800" width="29.900" height="2.100" fill="#2b8ae6"/><rect x="589.500" y="736.200" width="2.900" height="7"/><rect x="595.400" y="731.600" width="3" height="11.500"/><rect x="601.500" y="733.700" width="3" height="9.500"/><rect x="607.700" y="728.300" width="3" height="15"/><path d="M586 734.900 596.500 724.800 602.300 729.700 611.500 720.500" fill="none" stroke="#3a96ee" stroke-width="2.200"/><path d="M606 718.200 613.900 717.900 613.600 725.200z" fill="#2b8ae6"/></svg>正向有功谷电度(kWh)</div>
<div class="abs" style="left:820.0px;top:755.8px;width:285.2px;height:48.6px;border:1px solid #e0e0e0;font-size:17px;line-height:45.0px;text-align:center;color:#333;white-space:nowrap">正向有功深谷电度(kWh)</div>
<div class="abs" style="left:1104.6px;top:755.8px;width:285.0px;height:48.6px;border:1px solid #e0e0e0;font-size:17px;line-height:45.0px;text-align:center;color:#333;white-space:nowrap">反向有功电度(kWh)</div>
<div class="abs" style="left:1389.0px;top:755.8px;width:285.2px;height:48.6px;border:1px solid #e0e0e0;font-size:17px;line-height:45.0px;text-align:center;color:#333;white-space:nowrap">反向无功电度(kvarh)</div>
<div class="abs" style="left:1673.6px;top:755.8px;width:285.0px;height:48.6px;border:1px solid #e0e0e0;font-size:17px;line-height:45.0px;text-align:center;color:#333;white-space:nowrap">电折标量(kgce)</div>
<div class="abs" style="left:536.200px;top:708px;width:284px;height:48.200px;border:1.500px solid #1c8df5"></div>
<svg class="abs" style="left:783.300px;top:708.200px" width="36.800" height="35.400" viewBox="0 0 36.800 35.400"><path d="M0 0h36.800v35.400z" fill="#1890ff"/><path d="M15.300 9.800l6.300 6.400 12-12.400" fill="none" stroke="#fff" stroke-width="1.900"/></svg>
<div class="abs" style="left:1202px;top:829px;font-size:15px;line-height:22px;color:#1c8df5;white-space:nowrap">显示全部</div>
<svg class="abs" style="left:1270px;top:832px" width="18" height="12" viewBox="0 0 18 12" fill="#1890ff"><path d="M.300.300h17.400L9 11.700z"/></svg>
<div class="abs" style="left:530px;top:873px;width:1433.500px;height:246.600px;overflow:hidden;font-size:15px;color:#333">
<div class="abs" style="left:0.3px;top:0.3px;width:195.6px;height:93.9px;background:#fff;border-right:1px solid #edf0f6;border-bottom:1px solid #edf0f6;text-align:center;padding-left:2px;line-height:94.9px;color:#333;white-space:nowrap">时间</div>
<div class="abs" style="left:195.9px;top:0.3px;width:1237.3px;height:47.6px;background:#fff;border-right:1px solid #edf0f6;border-bottom:1px solid #edf0f6;text-align:center;line-height:46.6px;color:#333;white-space:nowrap">用能单位-正向有功电度(kWh)</div>
<div class="abs" style="left:195.9px;top:47.9px;width:247.7px;height:46.3px;background:#f5f9fd;border-right:1px solid #edf0f6;border-bottom:1px solid #edf0f6;text-align:center;line-height:45.3px;color:#333;white-space:nowrap">当期</div>
<div class="abs" style="left:443.6px;top:47.9px;width:247.4px;height:46.3px;background:#f5f9fd;border-right:1px solid #edf0f6;border-bottom:1px solid #edf0f6;text-align:center;line-height:45.3px;color:#333;white-space:nowrap">同期</div>
<div class="abs" style="left:691.0px;top:47.9px;width:247.6px;height:46.3px;background:#f5f9fd;border-right:1px solid #edf0f6;border-bottom:1px solid #edf0f6;text-align:center;line-height:45.3px;color:#333;white-space:nowrap">同比</div>
<div class="abs" style="left:938.6px;top:47.9px;width:247.4px;height:46.3px;background:#f5f9fd;border-right:1px solid #edf0f6;border-bottom:1px solid #edf0f6;text-align:center;line-height:45.3px;color:#333;white-space:nowrap">上期</div>
<div class="abs" style="left:1186.0px;top:47.9px;width:247.2px;height:46.3px;background:#f5f9fd;border-right:1px solid #edf0f6;border-bottom:1px solid #edf0f6;text-align:center;line-height:45.3px;color:#333;white-space:nowrap">环比</div>
<div class="abs" style="left:0.3px;top:94.2px;width:195.6px;height:46.6px;background:#fff;border-right:1px solid #edf0f6;border-bottom:1px solid #edf0f6;text-align:center;padding-left:2px;line-height:45.6px;color:#333;white-space:nowrap">2025-01-08</div>
<div class="abs" style="left:195.9px;top:94.2px;width:247.7px;height:46.6px;background:#fff;border-right:1px solid #edf0f6;border-bottom:1px solid #edf0f6;text-align:center;padding-left:0px;line-height:45.6px;color:#333;white-space:nowrap">262.25</div>
<div class="abs" style="left:443.6px;top:94.2px;width:247.4px;height:46.6px;background:#fff;border-right:1px solid #edf0f6;border-bottom:1px solid #edf0f6;text-align:center;padding-left:0px;line-height:45.6px;color:#333;white-space:nowrap">318.11</div>
<div class="abs" style="left:691.0px;top:94.2px;width:247.6px;height:46.6px;background:#fff;border-right:1px solid #edf0f6;border-bottom:1px solid #edf0f6;text-align:center;padding-left:0px;line-height:45.6px;color:#1f9d55;white-space:nowrap">-17.56%</div>
<div class="abs" style="left:938.6px;top:94.2px;width:247.4px;height:46.6px;background:#fff;border-right:1px solid #edf0f6;border-bottom:1px solid #edf0f6;text-align:center;padding-left:0px;line-height:45.6px;color:#333;white-space:nowrap">-</div>
<div class="abs" style="left:1186.0px;top:94.2px;width:247.2px;height:46.6px;background:#fff;border-right:1px solid #edf0f6;border-bottom:1px solid #edf0f6;text-align:center;padding-left:0px;line-height:45.6px;color:#333;white-space:nowrap">-</div>
<div class="abs" style="left:0.3px;top:140.8px;width:195.6px;height:47.4px;background:#f5f9fd;border-right:1px solid #edf0f6;border-bottom:1px solid #edf0f6;text-align:center;padding-left:2px;line-height:46.4px;color:#333;white-space:nowrap">2025-01-09</div>
<div class="abs" style="left:195.9px;top:140.8px;width:247.7px;height:47.4px;background:#f5f9fd;border-right:1px solid #edf0f6;border-bottom:1px solid #edf0f6;text-align:center;padding-left:0px;line-height:46.4px;color:#333;white-space:nowrap">307.74</div>
<div class="abs" style="left:443.6px;top:140.8px;width:247.4px;height:47.4px;background:#f5f9fd;border-right:1px solid #edf0f6;border-bottom:1px solid #edf0f6;text-align:center;padding-left:0px;line-height:46.4px;color:#333;white-space:nowrap">318.99</div>
<div class="abs" style="left:691.0px;top:140.8px;width:247.6px;height:47.4px;background:#f5f9fd;border-right:1px solid #edf0f6;border-bottom:1px solid #edf0f6;text-align:center;padding-left:0px;line-height:46.4px;color:#1f9d55;white-space:nowrap">-3.53%</div>
<div class="abs" style="left:938.6px;top:140.8px;width:247.4px;height:47.4px;background:#f5f9fd;border-right:1px solid #edf0f6;border-bottom:1px solid #edf0f6;text-align:center;padding-left:0px;line-height:46.4px;color:#333;white-space:nowrap">262.25</div>
<div class="abs" style="left:1186.0px;top:140.8px;width:247.2px;height:47.4px;background:#f5f9fd;border-right:1px solid #edf0f6;border-bottom:1px solid #edf0f6;text-align:center;padding-left:0px;line-height:46.4px;color:#c9252d;white-space:nowrap">17.35%</div>
<div class="abs" style="left:0.3px;top:188.2px;width:195.6px;height:45.7px;background:#fff;border-right:1px solid #edf0f6;border-bottom:1px solid #edf0f6;text-align:center;padding-left:2px;line-height:44.7px;color:#333;white-space:nowrap">2025-01-10</div>
<div class="abs" style="left:195.9px;top:188.2px;width:247.7px;height:45.7px;background:#fff;border-right:1px solid #edf0f6;border-bottom:1px solid #edf0f6;text-align:center;padding-left:0px;line-height:44.7px;color:#333;white-space:nowrap">232.93</div>
<div class="abs" style="left:443.6px;top:188.2px;width:247.4px;height:45.7px;background:#fff;border-right:1px solid #edf0f6;border-bottom:1px solid #edf0f6;text-align:center;padding-left:0px;line-height:44.7px;color:#333;white-space:nowrap">287.7</div>
<div class="abs" style="left:691.0px;top:188.2px;width:247.6px;height:45.7px;background:#fff;border-right:1px solid #edf0f6;border-bottom:1px solid #edf0f6;text-align:center;padding-left:0px;line-height:44.7px;color:#1f9d55;white-space:nowrap">-19.04%</div>
<div class="abs" style="left:938.6px;top:188.2px;width:247.4px;height:45.7px;background:#fff;border-right:1px solid #edf0f6;border-bottom:1px solid #edf0f6;text-align:center;padding-left:0px;line-height:44.7px;color:#333;white-space:nowrap">307.74</div>
<div class="abs" style="left:1186.0px;top:188.2px;width:247.2px;height:45.7px;background:#fff;border-right:1px solid #edf0f6;border-bottom:1px solid #edf0f6;text-align:center;padding-left:0px;line-height:44.7px;color:#1f9d55;white-space:nowrap">-24.31%</div>
<div class="abs" style="left:0.3px;top:233.9px;width:195.6px;height:46.6px;background:#f5f9fd;border-right:1px solid #edf0f6;border-bottom:1px solid #edf0f6;text-align:center;padding-left:2px;line-height:45.6px;color:#333;white-space:nowrap"></div>
<div class="abs" style="left:195.9px;top:233.9px;width:247.7px;height:46.6px;background:#f5f9fd;border-right:1px solid #edf0f6;border-bottom:1px solid #edf0f6;text-align:center;padding-left:0px;line-height:45.6px;color:#333;white-space:nowrap"></div>
<div class="abs" style="left:443.6px;top:233.9px;width:247.4px;height:46.6px;background:#f5f9fd;border-right:1px solid #edf0f6;border-bottom:1px solid #edf0f6;text-align:center;padding-left:0px;line-height:45.6px;color:#333;white-space:nowrap"></div>
<div class="abs" style="left:691.0px;top:233.9px;width:247.6px;height:46.6px;background:#f5f9fd;border-right:1px solid #edf0f6;border-bottom:1px solid #edf0f6;text-align:center;padding-left:0px;line-height:45.6px;color:#333;white-space:nowrap"></div>
<div class="abs" style="left:938.6px;top:233.9px;width:247.4px;height:46.6px;background:#f5f9fd;border-right:1px solid #edf0f6;border-bottom:1px solid #edf0f6;text-align:center;padding-left:0px;line-height:45.6px;color:#333;white-space:nowrap"></div>
<div class="abs" style="left:1186.0px;top:233.9px;width:247.2px;height:46.6px;background:#f5f9fd;border-right:1px solid #edf0f6;border-bottom:1px solid #edf0f6;text-align:center;padding-left:0px;line-height:45.6px;color:#333;white-space:nowrap"></div>
<div class="abs" style="left:0;top:0;width:1433px;height:1px;background:#edf0f6"></div><div class="abs" style="left:0;top:0;width:1px;height:247px;background:#edf0f6"></div>
</div>
<div class="abs" style="left:2022px;top:216px;width:9.500px;height:713px;border-radius:5px;background:#dcdcdc"></div>
<div class="abs" style="left:1952px;top:523px;width:80px;height:106px;border-radius:9px 0 0 9px;background:rgba(0,0,0,.500)"></div>
<svg class="abs" style="left:1960px;top:530px" width="12" height="12" viewBox="0 0 12 12" stroke="#fff" stroke-width="1.600"><path d="M.800.800l10.400 10.200M11.200.800.800 11"/></svg>
<svg class="abs" style="left:1974px;top:546px" width="42" height="42" viewBox="1974 546 42 42" fill="none" stroke="#fff" stroke-width="2.200" stroke-linejoin="round"><path d="M1985.500 566.500V552.400a2 2 0 0 1 2-2h14.200a2 2 0 0 1 2 2V566.500" fill="rgba(255,255,255,.120)"/><path d="M1988.500 556h12M1988.500 562.200h8.200" stroke-width="2.400"/><path d="M1985.500 559.500 1978.200 563.500V582a1.800 1.800 0 0 0 1.800 1.800h29.400a1.800 1.800 0 0 0 1.800-1.800V563.500L2003.700 559.500"/><path d="M1978.200 563.700 1994.700 571.800 2011.200 563.700"/></svg>
<div class="abs" style="left:1964.500px;top:585px;font-size:15px;line-height:22px;color:#fff;white-space:nowrap;font-weight:500">反馈咨询</div>
</div></div>
</body>
</html>
